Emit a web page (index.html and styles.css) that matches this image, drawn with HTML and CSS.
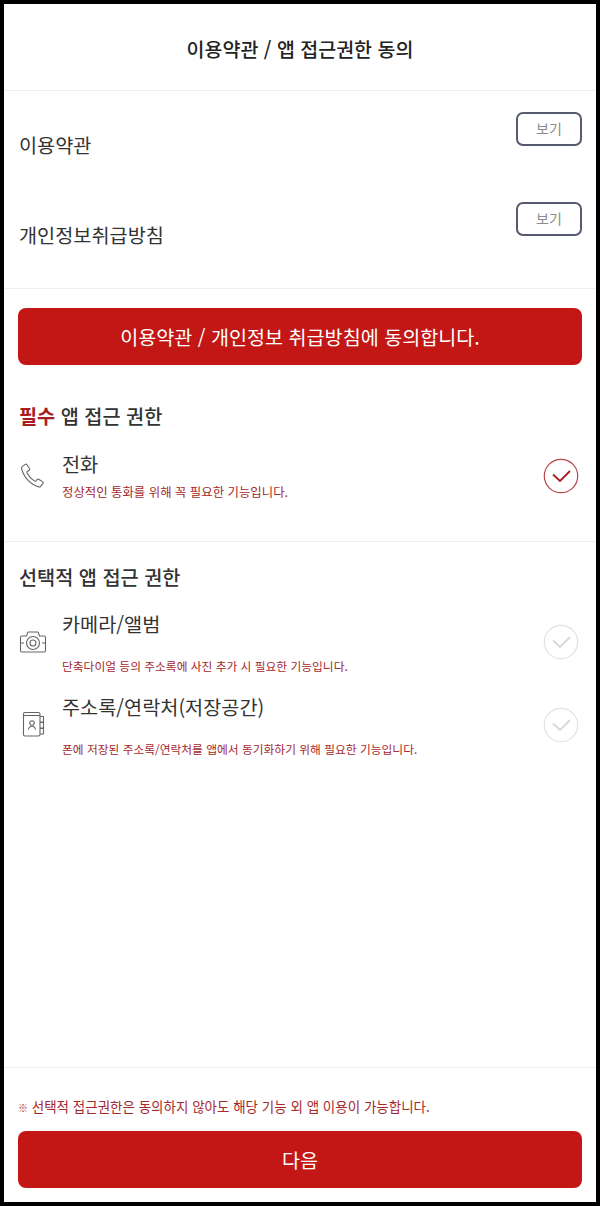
FILE: index.html
```html
<!DOCTYPE html>
<html lang="ko">

<head>
    <meta charset="UTF-8">
    <meta name="viewport" content="width=device-width, initial-scale=1.0">
    <title>이용약관 / 앱 접근권한 동의</title>

    <link rel="stylesheet" href="styles.css">

</head>

<body>
    <div class="page">
        <header class="top">
            <h1>이용약관 / 앱 접근권한 동의</h1>
        </header>

        <section class="terms">
            <div class="term">
                <span class="term-name">이용약관</span>
                <button class="view-btn">보기</button>
            </div>
            <div class="term">
                <span class="term-name">개인정보취급방침</span>
                <button class="view-btn">보기</button>
            </div>
        </section>

        <section class="required">
            <button class="red-btn">이용약관 / 개인정보 취급방침에 동의합니다.</button>
            <h2 class="perm-head"><em>필수</em> 앱 접근 권한</h2>
            <div class="perm perm-phone">
                <svg class="perm-icon" viewBox="0 0 28 28" fill="none" stroke="#666" stroke-width="1.1" stroke-linejoin="round">
                    <path d="M3.200 4.600 6.300 2.400c.6-.4 1.200-.3 1.600.3l2.600 4c.3.5.2 1.100-.3 1.500L8.300 9.500c-.5.4-.6.9-.3 1.500 1.800 3.400 4.200 6 7.500 8.100.5.3 1 .2 1.400-.2l1.300-1.500c.4-.5 1-.5 1.500-.2l4.100 2.700c.5.4.6 1 .2 1.500l-2.300 2.900c-.5.6-1.200.8-2 .6C11.500 22.500 4.800 15.500 2.500 6.400c-.2-.7.1-1.400.7-1.800Z" />
                </svg>
                <div class="perm-text">
                    <div class="perm-name">전화</div>
                    <p class="perm-desc">정상적인 통화를 위해 꼭 필요한 기능입니다.</p>
                </div>
                <svg class="check on" viewBox="0 0 36 36" fill="none">
                    <circle cx="18" cy="18" r="16.700" />
                    <path d="M10 16.500 17 23l10-10" />
                </svg>
            </div>
        </section>

        <section class="optional">
            <h2 class="perm-head">선택적 앱 접근 권한</h2>
            <div class="perm perm-tall">
                <svg class="perm-icon" viewBox="0 0 28 28" fill="none" stroke="#666" stroke-width="1.1" stroke-linejoin="round">
                    <path d="M3 9h4.500l1-3.200c.1-.5.5-.8 1-.8h9c.5 0 .9.3 1 .8l1 3.200H25c.8 0 1.500.7 1.500 1.500v13c0 .8-.7 1.500-1.500 1.500H3c-.8 0-1.500-.7-1.500-1.500v-13C1.500 9.700 2.200 9 3 9Z" />
                    <path d="M1.500 16H5M23 16h3.500" />
                    <circle cx="14" cy="16" r="6.500" />
                    <circle cx="14" cy="16" r="3" />
                </svg>
                <div class="perm-text">
                    <div class="perm-name">카메라/앨범</div>
                    <p class="perm-desc small">단축다이얼 등의 주소록에 사진 추가 시 필요한 기능입니다.</p>
                </div>
                <svg class="check" viewBox="0 0 36 36" fill="none">
                    <circle cx="18" cy="18" r="16.700" />
                    <path d="M10 16.500 17 23l10-10" />
                </svg>
            </div>
            <div class="perm perm-tall">
                <svg class="perm-icon" viewBox="0 0 28 28" fill="none" stroke="#666" stroke-width="1.1" stroke-linejoin="round">
                    <rect x="4.500" y="2.500" width="16.500" height="23.500" rx="1.500" />
                    <path d="M4.500 5.500H21" />
                    <path d="M21 6.500h3.500v5.500H21M21 12.500h3.500V18H21M21 18.500h3.500V24H21" />
                    <circle cx="13" cy="13" r="2.200" />
                    <path d="M9.500 19.500c.3-2 1.700-3.200 3.500-3.200s3.200 1.200 3.500 3.200" />
                </svg>
                <div class="perm-text">
                    <div class="perm-name">주소록/연락처(저장공간)</div>
                    <p class="perm-desc small">폰에 저장된 주소록/연락처를 앱에서 동기화하기 위해 필요한 기능입니다.</p>
                </div>
                <svg class="check" viewBox="0 0 36 36" fill="none">
                    <circle cx="18" cy="18" r="16.700" />
                    <path d="M10 16.500 17 23l10-10" />
                </svg>
            </div>
        </section>

        <footer class="bottom">
            <p class="note"><span class="mark">※</span> 선택적 접근권한은 동의하지 않아도 해당 기능 외 앱 이용이 가능합니다.</p>
            <button class="red-btn">다음</button>
        </footer>
    </div>
</body>

</html>
```

FILE: styles.css
```css
* {
    margin: 0;
    padding: 0;
    box-sizing: border-box;
}

body {
    font-family: "Noto Sans CJK KR", "Noto Sans", sans-serif;
    color: #222;
    background: #000;
}

.page {
    width: 600px;
    height: 1206px;
    border: 4px solid #000;
    background: #fff;
    display: flex;
    flex-direction: column;
}

.top {
    height: 87px;
    border-bottom: 1px solid #eee;
    display: flex;
    align-items: center;
    justify-content: center;
}

.top h1 {
    font-size: 19.500px;
    font-weight: 500;
    line-height: 28px;
    margin-top: 3px;
}

.terms {
    height: 198px;
    border-bottom: 1px solid #eee;
    padding: 21px 14px 0;
}

.term {
    height: 90px;
    display: flex;
    justify-content: space-between;
    align-items: flex-start;
}

.term-name {
    font-size: 19.700px;
    line-height: 28px;
    margin: 19px 0 0 1px;
    color: #333;
}

.view-btn {
    width: 66px;
    height: 34px;
    border: 2px solid #565a6e;
    border-radius: 7px;
    background: #fff;
    color: #8c8c8c;
    font-family: inherit;
    font-size: 14px;
    padding-bottom: 2px;
}

.red-btn {
    display: block;
    width: 564px;
    height: 57px;
    border: none;
    border-radius: 8px;
    background: #c21714;
    color: #fff;
    font-family: inherit;
    font-size: 19.600px;
}

.required {
    height: 253px;
    border-bottom: 1px solid #eee;
    padding: 19px 14px 0;
}

.perm-head {
    font-size: 19.700px;
    font-weight: 500;
    line-height: 28px;
    color: #333;
    margin-left: 1px;
}

.perm-head em {
    font-style: normal;
    font-weight: 700;
    color: #a81c1f;
}

.required .perm-head {
    margin-top: 37px;
}

.perm {
    display: flex;
    align-items: center;
}

.perm-icon {
    width: 28px;
    height: 28px;
    flex: none;
    margin: 0 15px 0 1px;
}

.perm-text {
    flex: 1;
}

.perm-name {
    font-size: 19.700px;
    line-height: 28px;
    color: #333;
}

.perm-desc {
    font-size: 12.400px;
    line-height: 18px;
    color: #a5282d;
}

.perm-desc.small {
    font-size: 11.750px;
}

.check {
    width: 36px;
    height: 36px;
    flex: none;
    margin-right: 3px;
    stroke: #e2e2e2;
    stroke-width: 1.200;
}

.check path {
    stroke: #d8d8d8;
    stroke-width: 1.800;
}

.check.on {
    stroke: #b5454a;
}

.check.on path {
    stroke: #a81c1f;
}

.perm-phone {
    margin-top: 20px;
}

.perm-phone .perm-desc {
    margin-top: 5px;
}

.optional {
    flex: 1;
    padding: 21px 14px 0;
}

.perm-tall {
    height: 83px;
}

.optional .perm-head {
    margin-bottom: 10px;
}

.perm-tall .perm-desc {
    margin-top: 19px;
}

.perm-tall .perm-icon {
    margin-bottom: 4px;
}

.perm-tall .check {
    margin-bottom: 2px;
}

.bottom {
    height: 135px;
    border-top: 1px solid #eee;
    padding: 28px 14px 0;
}

.note {
    font-size: 13.500px;
    line-height: 20px;
    color: #a5282d;
    margin-bottom: 13px;
}

.note .mark {
    font-size: 10px;
}
```
